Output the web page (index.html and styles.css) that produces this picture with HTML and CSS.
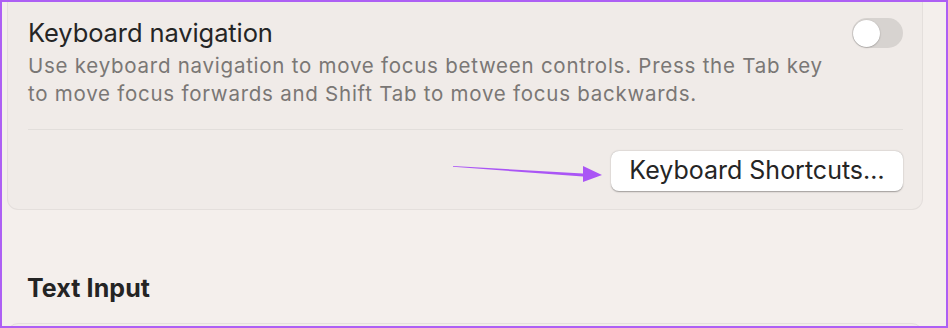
FILE: index.html
```html
<!DOCTYPE html>
<html>
<head>
<meta charset="utf-8">
<link rel="stylesheet" href="styles.css">
</head>
<body>
<div class="frame">
  <section class="card card-top">
    <div class="row">
      <div class="row-text">
        <div class="row-title">Keyboard navigation</div>
        <div class="row-desc">Use keyboard navigation to move focus between controls. Press the Tab key<br>to move focus forwards and Shift Tab to move focus backwards.</div>
      </div>
      <div class="toggle"><span class="knob"></span></div>
    </div>
    <div class="divider"></div>
    <div class="actions">
      <button class="btn">Keyboard Shortcuts…</button>
    </div>
  </section>
  <h2 class="section-title">Text Input</h2>
  <section class="card card-next"></section>
  <svg class="arrow" width="160" height="24" viewBox="0 0 160 24">
    <polygon points="1,3 131,10.6 131,3 150,12 131,19 131,13.6 1,3.8" fill="#aa55f5"/>
  </svg>
</div>
</body>
</html>
```

FILE: styles.css
```css
html, body {
  margin: 0;
  padding: 0;
}
body {
  font-family: Inter, "Noto Sans", sans-serif;
  -webkit-font-smoothing: antialiased;
}
.frame {
  position: relative;
  width: 948px;
  height: 328px;
  box-sizing: border-box;
  border: 2px solid #ad5ff4;
  background: #f4efec;
  overflow: hidden;
  padding-left: 5px;
}
.card {
  width: 916px;
  box-sizing: border-box;
  background: #f0ebe8;
  border: 1px solid #e4dfdc;
}
.card-top {
  border-top: none;
  border-radius: 0 0 11px 11px;
  padding: 16px 19px 18px 20px;
}
.row {
  display: flex;
  align-items: flex-start;
  justify-content: space-between;
}
.row-title {
  font-size: 25.5px;
  line-height: 30px;
  color: #252525;
  letter-spacing: -0.1px;
}
.row-desc {
  margin-top: 4px;
  font-size: 20.5px;
  line-height: 28px;
  color: #7a7775;
  letter-spacing: 0.75px;
  white-space: nowrap;
}
.toggle {
  position: relative;
  flex: none;
  width: 51px;
  height: 30px;
  border-radius: 15px;
  background: #d7d3d0;
}
.knob {
  position: absolute;
  left: 1px;
  top: 1.5px;
  width: 27px;
  height: 27px;
  border-radius: 50%;
  background: #ffffff;
  box-shadow: 0 0.5px 1.5px rgba(0,0,0,0.35);
}
.divider {
  height: 1px;
  background: #e2dedb;
  margin-top: 20.5px;
}
.actions {
  display: flex;
  justify-content: flex-end;
  margin-top: 21px;
}
.btn {
  font-family: Inter, "Noto Sans", sans-serif;
  font-size: 25px;
  color: #252525;
  background: #ffffff;
  border: none;
  border-radius: 8px;
  height: 40px;
  width: 292px;
  padding: 0 0 1px 0;
  box-shadow: 0 0.5px 1.5px rgba(0,0,0,0.35);
  letter-spacing: 0;
}
.section-title {
  margin: 64px 0 0 20px;
  font-size: 25px;
  line-height: 28px;
  font-weight: 700;
  color: #242424;
  letter-spacing: 0.1px;
}
.card-next {
  margin-top: 21px;
  height: 40px;
  border-radius: 11px 11px 0 0;
  background: #f1ece9;
}
.arrow {
  position: absolute;
  left: 450px;
  top: 161px;
}
```
